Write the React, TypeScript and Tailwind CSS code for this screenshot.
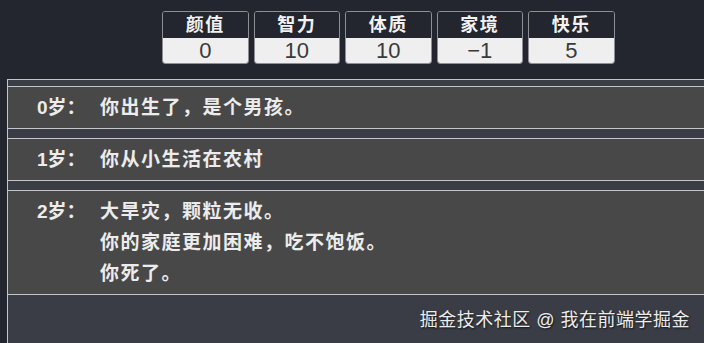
import React from 'react';

const stats = [
  { label: '颜值', value: '0' },
  { label: '智力', value: '10' },
  { label: '体质', value: '10' },
  { label: '家境', value: '−1' },
  { label: '快乐', value: '5' },
];

const events = [
  { age: 0, lines: ['你出生了，是个男孩。'] },
  { age: 1, lines: ['你从小生活在农村'] },
  { age: 2, lines: ['大旱灾，颗粒无收。', '你的家庭更加困难，吃不饱饭。', '你死了。'] },
];

const cjk = "font-['Liberation_Sans','Noto_Sans_CJK_SC',sans-serif]";

export default function App() {
  return (
    <div className={`h-[343px] overflow-hidden bg-[#23262e] ${cjk}`}>
      {/* 屬性欄 */}
      <div className="flex gap-[5px] pl-[162px] pt-[11px]">
        {stats.map(s => (
          <div key={s.label} className="w-[86.5px] rounded-[3px] border border-[#8d8f94] overflow-hidden">
            <div className="h-[26px] bg-[#23262e] text-center text-[18px] font-semibold leading-[26px] tracking-[1.5px] text-[#f2f2f2]">
              {s.label}
            </div>
            <div className="h-[25px] bg-[#efefef] text-center text-[22px] leading-[25px] text-[#3a3a3a]">
              {s.value}
            </div>
          </div>
        ))}
      </div>

      {/* 人生紀錄 */}
      <div className="mt-[15px] ml-[7px] h-[300px] border-l border-t border-[#c4c6ca] bg-[#3a3d45] pt-[6px]">
        <div className="flex flex-col gap-[9px]">
          {events.map(e => (
            <div
              key={e.age}
              className="flex border-y border-[#c4c6ca] bg-[#484848] py-[5px] pl-[29px] text-[19px] font-semibold leading-[31px] tracking-[1.5px] text-[#ececec]"
            >
              <span className="w-[63px] shrink-0 tracking-[0px]">{e.age}岁：</span>
              <div>
                {e.lines.map((l, i) => (
                  <div key={i}>{l}</div>
                ))}
              </div>
            </div>
          ))}
        </div>
        <div className="pr-[14px] pt-[14px] text-right text-[18px] leading-[22px] tracking-[0.5px] text-[#ececec] [text-shadow:1px_1px_2px_rgba(0,0,0,0.7)]">
          掘金技术社区 @ 我在前端学掘金
        </div>
      </div>
    </div>
  );
}
